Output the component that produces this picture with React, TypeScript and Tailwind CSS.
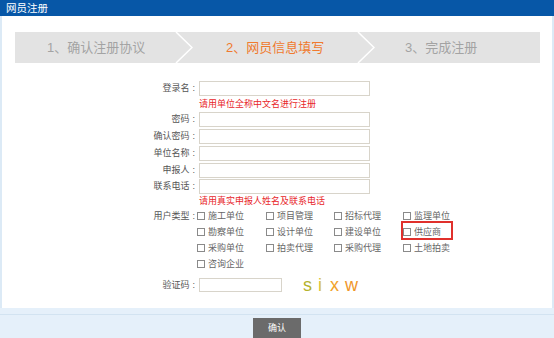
import React from "react";

const userTypes: string[][] = [
  ["施工单位", "项目管理", "招标代理", "监理单位"],
  ["勘察单位", "设计单位", "建设单位", "供应商"],
  ["采购单位", "拍卖代理", "采购代理", "土地拍卖"],
  ["咨询企业"],
];

function Chevron() {
  return (
    <svg width="18" height="31" viewBox="0 0 18 31" className="shrink-0 block">
      <polyline points="1,0 17,15.5 1,31" fill="none" stroke="#ffffff" strokeWidth="1.5" />
    </svg>
  );
}

function Label({ text }: { text: string }) {
  return (
    <div className="w-[77px] flex items-center justify-end text-[9px] text-[#555] leading-none pr-[1px]">
      {text}
      <span className="ml-[3px] mr-[1px]">:</span>
    </div>
  );
}

function Field({ label, width = "w-[171px]", h = "h-[15px]" }: { label: string; width?: string; h?: string }) {
  return (
    <div className={`flex items-center ${h} ml-[118px]`}>
      <Label text={label} />
      <div className={`${width} ${h} ml-[2px] border border-[#d8d4ca] bg-white`} />
    </div>
  );
}

function Hint({ text, h }: { text: string; h: string }) {
  return (
    <div className={`${h} flex items-center ml-[197px] text-[9px] text-[#e8262a] leading-none`}>{text}</div>
  );
}

export default function App() {
  return (
    <div className="w-[554px] h-[338px] overflow-hidden bg-white font-['Liberation_Sans','Noto_Sans_CJK_SC',sans-serif]">
      <div className="h-[16px] bg-[#0757a7] flex items-center pl-[6px] text-white text-[10.5px] leading-none">
        网员注册
      </div>

      <div className="h-[292px] border-x-2 border-[#dceaf6] flex flex-col">
        <div className="mt-[16px] ml-[13px] w-[525px] h-[31px] bg-[#e3e3e3] flex text-[13px] leading-none">
          <div className="w-[160px] flex items-center pl-[32px] text-[#a3a3a3]">1、确认注册协议</div>
          <Chevron />
          <div className="w-[164px] flex items-center pl-[33px] text-[#f07a2e]">2、网员信息填写</div>
          <Chevron />
          <div className="flex-1 flex items-center pl-[30px] text-[#a3a3a3]">3、完成注册</div>
        </div>

        <div className="mt-[18px] flex flex-col">
          <Field label="登录名" />
          <Hint text="请用单位全称中文名进行注册" h="h-[16px]" />
          <Field label="密码" />
          <div className="h-[2px]" />
          <Field label="确认密码" />
          <div className="h-[2px]" />
          <Field label="单位名称" />
          <div className="h-[2px]" />
          <Field label="申报人" />
          <div className="h-[1px]" />
          <Field label="联系电话" />
          <Hint text="请用真实申报人姓名及联系电话" h="h-[14px]" />

          <div className="flex ml-[118px]">
            <div className="h-[16px] flex">
              <Label text="用户类型" />
            </div>
            <div className="flex flex-col">
              {userTypes.map((row, ri) => (
                <div key={ri} className="grid grid-cols-[69px_68px_69px_68px] h-[16px]">
                  {row.map((t) => (
                    <div key={t} className="relative flex items-center gap-[3px]">
                      <span className="w-[8px] h-[8px] border border-[#8a8a8a] bg-white shrink-0" />
                      <span className="text-[9px] text-[#666] leading-none">{t}</span>
                      {t === "供应商" && (
                        <span className="absolute left-[-2px] top-[-3px] w-[52px] h-[19px] border-2 border-[#e0302c]" />
                      )}
                    </div>
                  ))}
                </div>
              ))}
            </div>
          </div>

          <div className="mt-[4px] flex items-center">
            <Field label="验证码" width="w-[83px]" h="h-[14px]" />
            <div className="ml-[21px] flex items-center gap-[6px] text-[18px] leading-none font-['Liberation_Sans',sans-serif]">
              <span className="text-[#b4b22e]">s</span>
              <span className="text-[#d9c23c]">i</span>
              <span className="text-[#f1a22a] ml-[2px]">x</span>
              <span className="text-[#f0962a]">w</span>
            </div>
          </div>
        </div>
      </div>

      <div className="h-[30px] bg-[#e5f0fa] flex flex-col">
        <div className="h-[6px]" />
        <div className="h-[1px] bg-[#d2e3f1]" />
        <div className="h-[3px]" />
        <div className="ml-[253px] w-[48px] h-[20px] bg-[#6b6b6b] flex items-center justify-center text-white text-[9px] leading-none">
          确认
        </div>
      </div>
    </div>
  );
}
